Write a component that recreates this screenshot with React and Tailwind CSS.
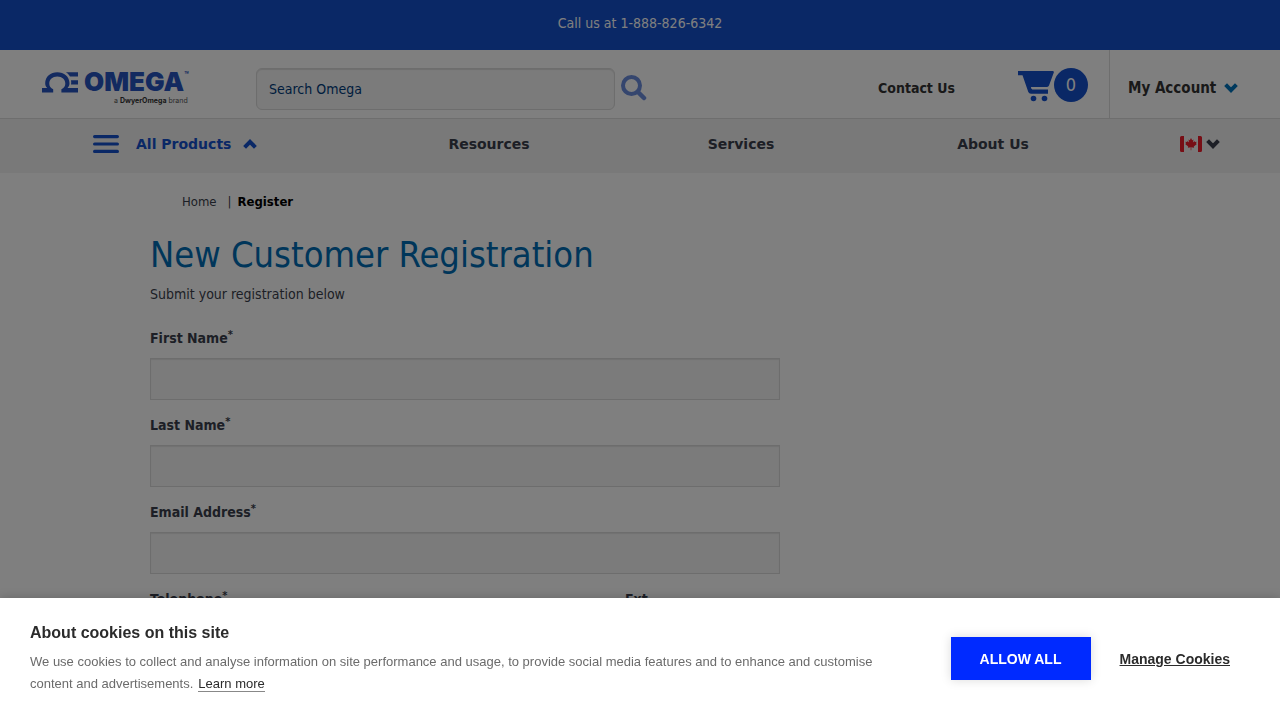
import React from "react";

const tahoma =
  "font-['Tahoma','DejaVu_Sans_Condensed','Noto_Sans',sans-serif]";

function Chevron({ className, up }) {
  return (
    <svg
      viewBox="0 0 14 10"
      className={className}
      fill="none"
      stroke="currentColor"
      strokeWidth="4"
      aria-hidden="true"
    >
      <path d={up ? "M1.600 8.300 7 2.900l5.400 5.400" : "M1.600 1.700 7 7.100l5.400-5.400"} />
    </svg>
  );
}

function Logo() {
  return (
    <a href="#home" className="flex flex-col text-[#2754c0]">
      <span className="flex h-[22px] items-center">
        <svg viewBox="0 0 36 21" className="h-[21px] w-9" fill="currentColor" aria-hidden="true">
          <path d="M0 16h5.200C3.900 14.700 3.200 13.300 3.200 11.200 3.200 4.600 8.600.2 15.300.2s12.200 4.400 12.200 11c0 2.100-.8 3.500-2 4.800H36v4.600H19.400v-3.400c2.500-1.100 3.900-3 3.900-5.500 0-4.100-3.200-7.100-8-7.100s-8 3-8 7.100c0 2.500 1.400 4.400 3.900 5.500v3.400H0Z" />
          <path d="M23.800.2H36v4.400h-8c-1.100-1.900-2.500-3.400-4.200-4.400ZM29 8.200h7v4.400h-7c.3-1.500.3-2.900 0-4.400Z" />
        </svg>
        <span className="ml-1.5 font-['Inter'] text-[26px] leading-[22px] font-black">OMEGA</span>
        <span className="self-start font-['Inter'] text-[7px] leading-2 font-bold">™</span>
      </span>
      <span className="mt-0.5 pl-[72px] font-['Inter'] text-[7px] leading-3 text-[#555]">
        a <b className="font-bold text-[#333]">DwyerOmega</b> brand
      </span>
    </a>
  );
}

function CartIcon() {
  return (
    <svg viewBox="0 0 36 31" className="h-[31px] w-9" fill="currentColor" aria-hidden="true">
      <path d="M0 0h34.500q1.700 0 1.300 1.600L31 14.600q-.5 1.400-2 1.400H12.900q0 2 1.400 2.400H30v4.400H13q-2 0-2.700-1.800L4.500 4.200H0Z" />
      <circle cx="15.500" cy="27.500" r="2.800" />
      <circle cx="26.500" cy="27.500" r="2.800" />
    </svg>
  );
}

function CanadaFlag() {
  return (
    <svg viewBox="0 0 22 16" className="h-4 w-[22px]" role="img" aria-label="Canada">
      <rect width="22" height="16" rx="1.500" fill="#f4f4f4" />
      <path d="M1.500 0H4v16H1.500Q0 16 0 14.500v-13Q0 0 1.500 0ZM18 0h2.500Q22 0 22 1.500v13q0 1.500-1.500 1.500H18Z" fill="#ef1c2b" />
      <path
        fill="#ef1c2b"
        d="m11 2 1.200 2.200 1.300-.7-.6 3 1.600-1.500.4 1 1.700-.3-.6 1.800.9.500-3.100 2.500.3 1.200-2.800-.4v3h-.6v-3l-2.800.4.3-1.200-3.100-2.500.9-.5-.6-1.800 1.700.3.400-1 1.600 1.500-.6-3 1.300.7Z"
      />
    </svg>
  );
}

function Field({ id, label }) {
  return (
    <div className="mb-3 flex flex-col">
      <label htmlFor={id} className="h-8 text-sm leading-6 font-bold">
        {label}
        <span className="align-[5px] text-[11px] leading-none">*</span>
      </label>
      <input
        id={id}
        type="text"
        className="mb-px h-[42px] w-full border border-[#dadada] bg-[#f6f6f6] px-3 text-sm shadow-[inset_0_1px_1px_rgba(0,0,0,0.08)] outline-none"
      />
    </div>
  );
}

function Header() {
  return (
    <header>
      <div className="h-[50px] bg-[#1450cc] text-center text-sm leading-[46px] text-white">
        Call us at 1-888-826-6342
      </div>
      <div className="flex h-[69px] border-b border-[#dcdcdc] pl-[42px]">
        <div className="w-[214px] pt-[21px]">
          <Logo />
        </div>
        <form className="flex w-[391px] pt-[18px]">
          <input
            type="search"
            aria-label="Search Omega"
            placeholder="Search Omega"
            className="h-[42px] min-w-0 flex-1 rounded-md border border-[#dadada] bg-[#f6f6f6] px-3 text-sm text-[#003a70] shadow-[inset_0_1px_1px_rgba(0,0,0,0.1)] outline-none placeholder:text-[#003c7c]"
          />
          <button type="button" aria-label="Search" className="flex h-10 w-8 items-center pl-1.5 text-[#6a8cdc]">
            <svg viewBox="0 0 26 26" className="size-[26px]" fill="none" stroke="currentColor" strokeWidth="4" aria-hidden="true">
              <circle cx="10.500" cy="10.500" r="8.500" />
              <path d="m17 17 6 6" strokeWidth="4.500" strokeLinecap="round" />
            </svg>
          </button>
        </form>
        <div className="flex flex-1 justify-end text-[#333]">
          <a href="#contact" className="mr-[63px] text-sm leading-[76px] font-bold">
            Contact Us
          </a>
          <a href="#cart" aria-label="Cart, 0 items" className="mr-[21px] flex pt-[18px] text-[#1450cc]">
            <span className="pt-[3px]">
              <CartIcon />
            </span>
            <span className="size-[34px] rounded-full bg-[#1450cc] text-center text-lg leading-[34px] text-white">
              0
            </span>
          </a>
          <button
            type="button"
            className="flex w-[171px] items-center border-l border-[#dcdcdc] pt-2 pl-[18px] text-[15px] font-bold"
          >
            <span>My Account</span>
            <Chevron className="ml-2 h-2.5 w-3.5 text-[#0072bb]" />
          </button>
        </div>
      </div>
      <nav className="flex h-[54px] bg-[#f2f2f2] pr-[60px] pl-[93px] font-['DejaVu_Sans',sans-serif] text-sm leading-[50px] font-bold text-[#3a3f4c]">
        <button type="button" className="flex h-[50px] w-[270px] items-center text-[#1450cc]">
          <svg viewBox="0 0 26 18" className="h-[18px] w-[26px]" stroke="currentColor" strokeWidth="3.200" strokeLinecap="round" aria-hidden="true">
            <path d="M1.600 1.600h22.800M1.600 9h22.800M1.600 16.400h22.800" />
          </svg>
          <span className="ml-[17px]">All Products</span>
          <Chevron up className="ml-3 h-2.5 w-3.5" />
        </button>
        <a href="#resources" className="flex-1 text-center">Resources</a>
        <a href="#services" className="flex-1 text-center">Services</a>
        <a href="#about" className="flex-1 text-center">About Us</a>
        <button type="button" aria-label="Choose country" className="flex h-[50px] w-[101px] items-center justify-end gap-1">
          <CanadaFlag />
          <Chevron className="h-2.5 w-3.5" />
        </button>
      </nav>
    </header>
  );
}

function CookieBanner() {
  return (
    <section
      aria-label="About cookies on this site"
      className="fixed inset-x-0 bottom-0 flex items-center bg-white px-[30px] pt-6 pb-[25px] font-['Liberation_Sans',Arial,sans-serif] text-[#2b2b2b] shadow-[0_0_10px_rgba(0,0,0,0.2)]"
    >
      <div className="flex-1 pr-12">
        <h2 className="text-base leading-[22px] font-bold">About cookies on this site</h2>
        <p className="mt-[7px] text-[13px] leading-[22px] text-[#6b6b6b]">
          We use cookies to collect and analyse information on site performance and usage, to
          provide social media features and to enhance and customise content and advertisements.
          <a href="#learn" className="ml-[5px] inline-block border-b border-[#888] leading-[15px] text-[#2b2b2b]">
            Learn more
          </a>
        </p>
      </div>
      <button
        type="button"
        className="h-[43px] w-[140px] bg-[#002aff] text-sm font-bold text-white shadow-[0_0_10px_rgba(0,0,0,0.15)]"
      >
        ALLOW ALL
      </button>
      <button type="button" className="mr-5 ml-[29px] text-sm font-bold underline">
        Manage Cookies
      </button>
    </section>
  );
}

export default function App() {
  return (
    <div className={`h-screen overflow-hidden bg-white text-[#3a3f4c] ${tahoma}`}>
      <Header />
      <main className="px-[150px] pt-5">
        <div className="flex pl-8 text-[13px] leading-[18px]">
          <a href="#home">Home</a>
          <span className="ml-[11px]">|</span>
          <span className="ml-1.5 font-bold text-black">Register</span>
        </div>
        <h1 className="mt-[22px] text-4xl leading-[44px] text-[#006cb5]">New Customer Registration</h1>
        <p className="mt-[5px] text-sm leading-6">Submit your registration below</p>
        <form className="mt-5 w-[630px] max-w-full">
          <Field id="first-name" label="First Name" />
          <Field id="last-name" label="Last Name" />
          <Field id="email" label="Email Address" />
          <div className="flex">
            <div className="w-[475px] pr-[30px]">
              <Field id="telephone" label="Telephone" />
            </div>
            <div className="flex flex-1 flex-col">
              <label htmlFor="ext" className="h-8 text-sm leading-6 font-bold">
                Ext.
              </label>
              <input id="ext" type="text" className="h-[42px] w-full border border-[#dadada] bg-[#f6f6f6] px-3" />
            </div>
          </div>
        </form>
      </main>
      <div className="fixed inset-0 bg-black/50" />
      <CookieBanner />
    </div>
  );
}
